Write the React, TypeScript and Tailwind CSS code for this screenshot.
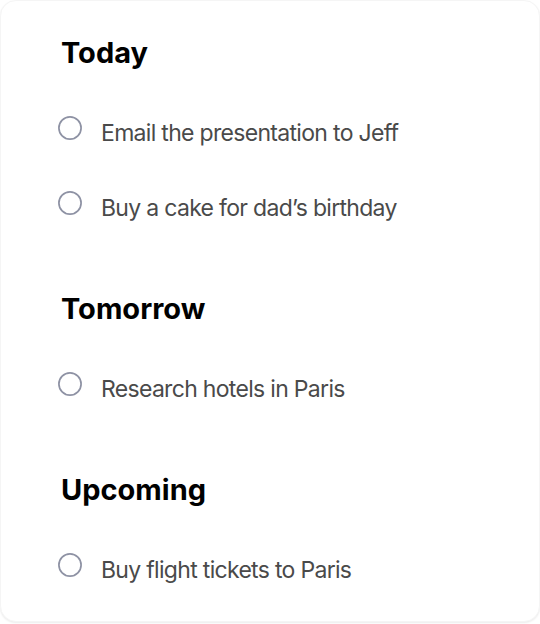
const sections = [
  { title: "Today", items: ["Email the presentation to Jeff", "Buy a cake for dad’s birthday"] },
  { title: "Tomorrow", items: ["Research hotels in Paris"] },
  { title: "Upcoming", items: ["Buy flight tickets to Paris"] },
];

function TaskRow({ label }: { label: string }) {
  return (
    <li className="flex items-start gap-5">
      <svg viewBox="0 0 24 24" className="mt-[-2px] ml-[1px] h-6 w-6 shrink-0">
        <circle cx="12" cy="12" r="11.1" fill="none" stroke="#8e92a4" strokeWidth="1.7" />
      </svg>
      <span className="ml-[-1px] text-[23px] leading-[30px] tracking-[-0.03em] text-[#4a4a4a]">{label}</span>
    </li>
  );
}

export default function App() {
  return (
    <div className="min-h-screen bg-white" style={{ fontFamily: "Inter, 'Noto Sans', sans-serif" }}>
      <div className="flex w-[540px] flex-col gap-[69px] rounded-2xl border border-[#f5f5f5] bg-white px-[56px] pt-[35px] pb-[36px] shadow-[0_1px_2px_rgba(0,0,0,0.08)]">
        {sections.map((s) => (
          <section key={s.title} className="flex flex-col gap-[48px]">
            <h2 className="pl-[4px] text-[29px] font-bold leading-[34px] text-black">{s.title}</h2>
            <ul className="flex flex-col gap-[45px]">
              {s.items.map((it) => (
                <TaskRow key={it} label={it} />
              ))}
            </ul>
          </section>
        ))}
      </div>
    </div>
  );
}
